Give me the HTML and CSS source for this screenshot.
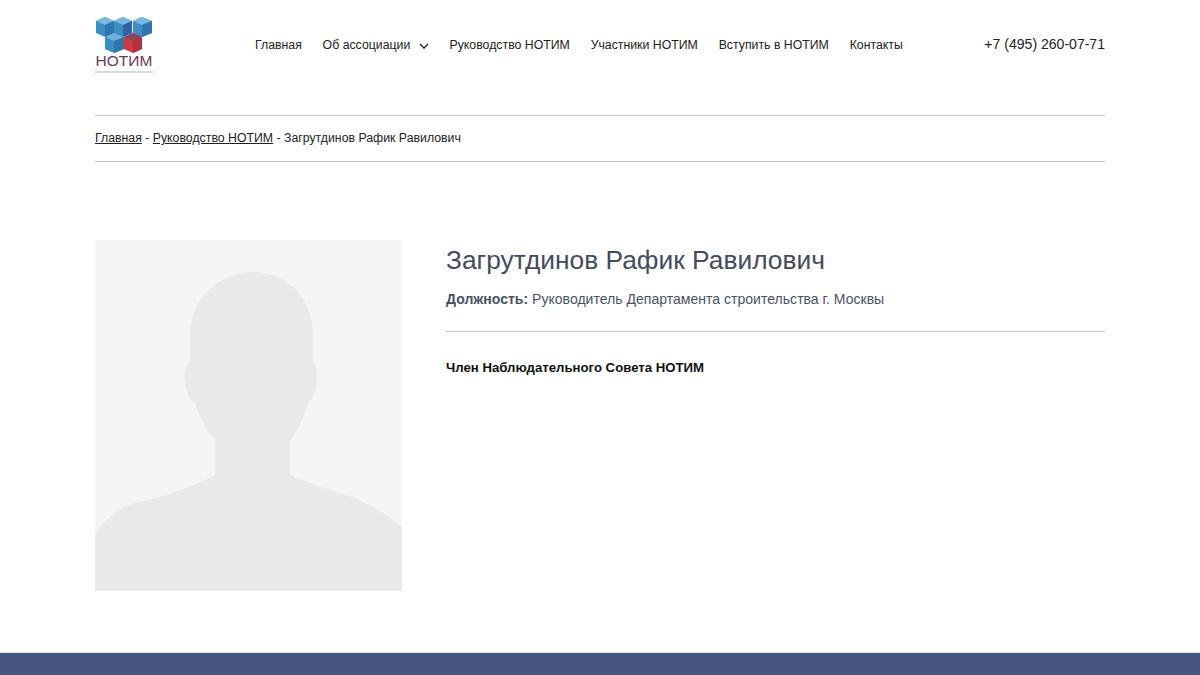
FILE: index.html
```html
<!DOCTYPE html>
<html lang="ru">
<head>
    <meta charset="UTF-8">
    <meta name="viewport" content="width=device-width, initial-scale=1.0">
    <title>Загрутдинов Рафик Равилович</title>
    <link rel="stylesheet" href="styles.css">
</head>
<body>
    <header class="header container">
        <a class="logo" href="#">
            <svg class="logo-cubes" width="58" height="38" viewBox="0 0 58 38">
                <!-- back row -->
                <path d="M1 5 L10 1 L19 5 L19 17 L10 21 L1 17 Z" fill="#3a8fc4"/>
                <path d="M1 5 L10 1 L19 5 L10 9 Z" fill="#79b9dd"/>
                <path d="M10 9 L19 5 L19 17 L10 21 Z" fill="#2f76ad"/>
                <path d="M19 5 L28 1 L37 5 L37 17 L28 21 L19 17 Z" fill="#3a8fc4"/>
                <path d="M19 5 L28 1 L37 5 L28 9 Z" fill="#79b9dd"/>
                <path d="M28 9 L37 5 L37 17 L28 21 Z" fill="#2b63a3"/>
                <path d="M38 5 L47 1 L57 5 L57 17 L47 21 L38 17 Z" fill="#3a8fc4"/>
                <path d="M38 5 L47 1 L57 5 L47 9 Z" fill="#79b9dd"/>
                <path d="M47 9 L57 5 L57 17 L47 21 Z" fill="#2f76ad"/>
                <!-- front row -->
                <path d="M10 21 L19 17 L29 21 L29 33 L19 37 L10 33 Z" fill="#3a8fc4"/>
                <path d="M10 21 L19 17 L29 21 L19 25 Z" fill="#6fb2d9"/>
                <path d="M19 25 L29 21 L29 33 L19 37 Z" fill="#2f76ad"/>
                <path d="M29 21 L38 17 L47 21 L47 33 L38 37 L29 33 Z" fill="#cf3a40"/>
                <path d="M29 21 L38 17 L47 21 L38 25 Z" fill="#86455f"/>
                <path d="M38 25 L47 21 L47 33 L38 37 Z" fill="#b5303c"/>
            </svg>
            <span class="logo-name">НОТИМ</span>
            <span class="logo-line"></span>
        </a>
        <nav class="nav">
            <a href="#">Главная</a>
            <a class="nav-parent" href="#">Об ассоциации
                <svg width="10" height="6" viewBox="0 0 10 6"><path d="M1 1 L5 5 L9 1" fill="none" stroke="#333" stroke-width="1.5"/></svg>
            </a>
            <a href="#">Руководство НОТИМ</a>
            <a href="#">Участники НОТИМ</a>
            <a href="#">Вступить в НОТИМ</a>
            <a href="#">Контакты</a>
        </nav>
        <a class="phone" href="#">+7 (495) 260-07-71</a>
    </header>

    <div class="breadcrumbs container">
        <div class="breadcrumbs-inner">
            <a href="#">Главная</a> - <a href="#">Руководство НОТИМ</a> - Загрутдинов Рафик Равилович
        </div>
    </div>

    <main class="person container">
        <svg class="person-photo" width="307" height="351" viewBox="0 0 307 351">
            <rect width="307" height="351" fill="#f5f5f5"/>
            <path d="M158 32 C125 32 95 58 95 95 L95 122 C90 124 89 132 90 140 C91 152 94 161 100 162 C104 178 113 192 120 200 L120 235 C95 249 62 258 33 265 C18 272 6 284 0 295 L0 351 L307 351 L307 287 C292 274 275 265 257 257 C235 250 212 243 195 235 L195 200 C203 190 210 176 213 162 C219 160 222 148 222 133 C222 126 220 123 218 122 L218 95 C218 58 192 32 158 32 Z" fill="#e9e9e9"/>
        </svg>
        <div class="person-info">
            <h1 class="person-name">Загрутдинов Рафик Равилович</h1>
            <p class="person-post"><b>Должность:</b> Руководитель Департамента строительства г. Москвы</p>
            <p class="person-note">Член Наблюдательного Совета НОТИМ</p>
        </div>
    </main>

    <footer class="footer"></footer>
</body>
</html>
```

FILE: styles.css
```css
* {
    box-sizing: border-box;
}

html, body {
    height: 100%;
}

body {
    margin: 0;
    background-color: #fff;
    color: #222;
    font-family: "Liberation Sans", Arial, sans-serif;
    font-size: 12.3px;
    overflow: hidden;
}

a {
    color: inherit;
}

.container {
    width: 1010px;
    margin: 0 auto;
}

/* Header */
.header {
    display: flex;
    align-items: flex-start;
    height: 115px;
    padding-top: 16px;
}

.logo {
    display: flex;
    flex-direction: column;
    width: 58px;
    text-decoration: none;
}

.logo-cubes {
    display: block;
}

.logo-name {
    color: #6b3a55;
    font-size: 15.5px;
    line-height: 14px;
    text-align: center;
    white-space: nowrap;
}

.logo-line {
    height: 2px;
    margin-top: 3px;
    background-color: #d8dade;
}

.nav {
    display: flex;
    gap: 20.8px;
    margin-left: 102px;
    padding-top: 21px;
    line-height: 16px;
}

.nav a {
    text-decoration: none;
    white-space: nowrap;
}

.nav-parent svg {
    margin-left: 5px;
    vertical-align: 0;
}

.phone {
    margin-left: auto;
    padding-top: 20px;
    font-size: 14.05px;
    line-height: 17px;
    text-decoration: none;
}

/* Breadcrumbs */
.breadcrumbs-inner {
    height: 47px;
    border-top: 1px solid #c4c4c4;
    border-bottom: 1px solid #c4c4c4;
    line-height: 44px;
}

/* Person */
.person {
    display: flex;
    gap: 44px;
    margin-top: 78px;
}

.person-photo {
    display: block;
    flex: none;
}

.person-info {
    flex: 1;
}

.person-name {
    margin: 0;
    color: #454b5e;
    font-size: 26.35px;
    font-weight: 400;
    line-height: 41px;
}

.person-post {
    margin: 8px 0 0;
    padding-bottom: 22px;
    border-bottom: 1px solid #c4c4c4;
    color: #4b5266;
    font-size: 14.06px;
    line-height: 20px;
}

.person-note {
    margin: 27px 0 0;
    color: #111;
    font-size: 13.2px;
    font-weight: 700;
    line-height: 18px;
}

/* Footer */
.footer {
    position: fixed;
    left: 0;
    right: 0;
    bottom: 0;
    height: 23px;
    border-top: 1px solid #dbe1ec;
    background-color: #475681;
}
```
